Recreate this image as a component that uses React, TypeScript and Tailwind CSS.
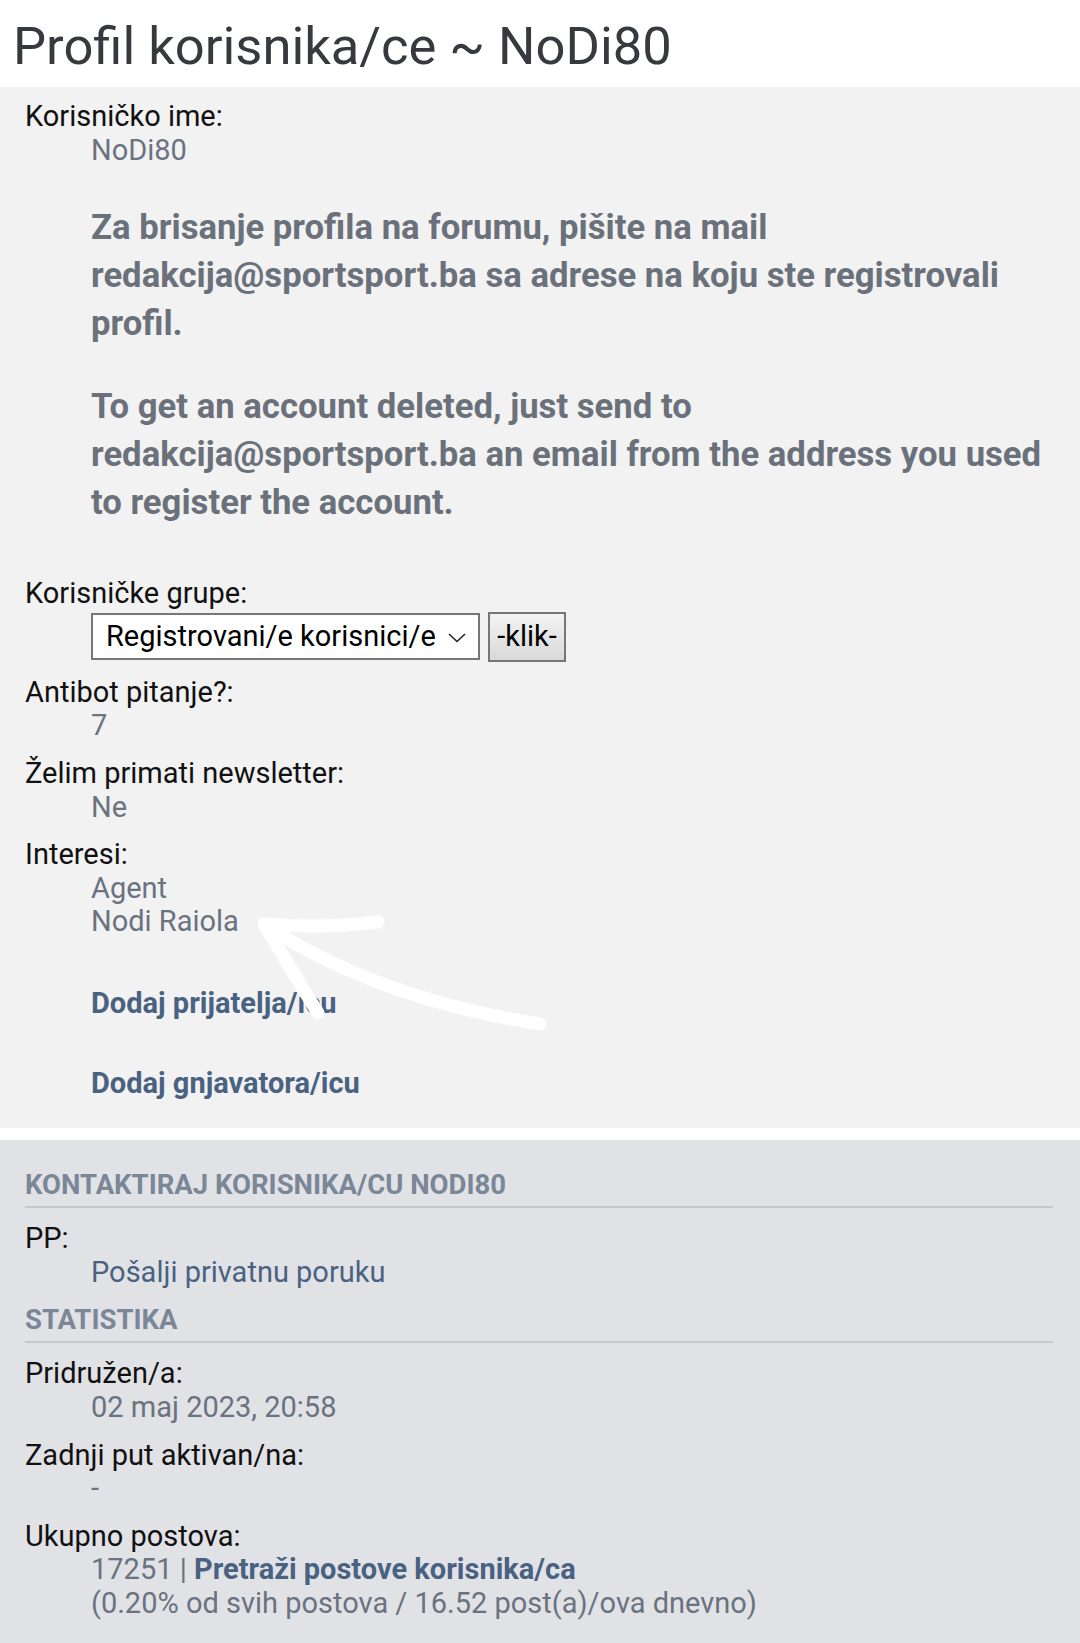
export default function App() {
  const label = "text-[#111111]";
  const value = "ml-[66px] text-[#6b7280]";
  const link = "text-[#4a6282]";
  return (
    <div className="relative w-[1080px] min-h-[1643px] bg-white font-['Roboto',sans-serif] text-[29px] leading-[33.6px]">
      <h1 className="h-[87px] pt-[15px] pl-[13px] text-[52.5px] leading-[1.2] font-normal text-[#36393e]">
        Profil korisnika/ce ~ NoDi80
      </h1>

      <section className="bg-[#f2f2f2] pl-[25px] pr-[27px] pt-[13px] pb-[28px]">
        <div className={label}>Korisničko ime:</div>
        <div className={value}>
          <div>NoDi80</div>
          <p className="mt-[36px] text-[34.7px] leading-[48px] font-bold text-[#6b717b]">
            Za brisanje profila na forumu, pišite na mail redakcija@sportsport.ba sa adrese na koju ste registrovali profil.
          </p>
          <p className="mt-[35px] text-[34.7px] leading-[48px] font-bold text-[#6b717b]">
            To get an account deleted, just send to redakcija@sportsport.ba an email from the address you used to register the account.
          </p>
        </div>

        <div className={`mt-[51px] ${label}`}>Korisničke grupe:</div>
        <div className="ml-[66px] mt-px flex items-center gap-[8px]">
          <div className="flex h-[47px] w-[389px] items-center justify-between border-2 border-[#767676] bg-white pl-[13px] pr-[12px] text-[#000]">
            <span>Registrovani/e korisnici/e</span>
            <svg width="18" height="10" viewBox="0 0 18 10" className="mt-[2px]">
              <path d="M1 1 L9 8.5 L17 1" fill="none" stroke="#222" strokeWidth="1.6" />
            </svg>
          </div>
          <button className="h-[50px] w-[78px] border-2 border-[#767676] bg-gradient-to-b from-[#f3f3f3] to-[#d9d9d9] text-[29px] leading-none text-black">
            -klik-
          </button>
        </div>

        <div className={`mt-[14px] ${label}`}>Antibot pitanje?:</div>
        <div className={value}>7</div>

        <div className={`mt-[14px] ${label}`}>Želim primati newsletter:</div>
        <div className={value}>Ne</div>

        <div className={`mt-[14px] ${label}`}>Interesi:</div>
        <div className={value}>
          <div>Agent</div>
          <div>Nodi Raiola</div>
          <div className={`mt-[48px] font-bold ${link}`}>Dodaj prijatelja/icu</div>
          <div className={`mt-[46px] font-bold ${link}`}>Dodaj gnjavatora/icu</div>
        </div>
      </section>

      <section className="mt-[12px] bg-[#e1e2e6] pl-[25px] pr-[27px] pt-[28px] pb-[40px]">
        <h2 className="border-b-2 border-[#c7c8cc] pb-[5px] text-[27.5px] font-bold uppercase leading-[1.2] text-[#7b8697]">
          Kontaktiraj korisnika/cu NoDi80
        </h2>
        <div className={`mt-[14px] ${label}`}>PP:</div>
        <div className={`ml-[66px] ${link}`}>Pošalji privatnu poruku</div>

        <h2 className="mt-[14px] border-b-2 border-[#c7c8cc] pb-[5px] text-[27.5px] font-bold uppercase leading-[1.2] text-[#7b8697]">
          Statistika
        </h2>
        <div className={`mt-[14px] ${label}`}>Pridružen/a:</div>
        <div className={value}>02 maj 2023, 20:58</div>

        <div className={`mt-[14px] ${label}`}>Zadnji put aktivan/na:</div>
        <div className={value}>-</div>

        <div className={`mt-[14px] ${label}`}>Ukupno postova:</div>
        <div className={value}>
          <div>
            17251 | <span className={`font-bold ${link}`}>Pretraži postove korisnika/ca</span>
          </div>
          <div>(0.20% od svih postova / 16.52 post(a)/ova dnevno)</div>
        </div>
      </section>

      <svg
        className="pointer-events-none absolute left-0 top-0"
        width="1080"
        height="1643"
        viewBox="0 0 1080 1643"
      >
        <g fill="none" stroke="#ffffff" strokeWidth="13" strokeLinecap="round" strokeLinejoin="round">
          <path d="M264 924 Q320 929 378 922" />
          <path d="M264 924 Q290 968 318 1013" />
          <path d="M276 932 Q385 1000 540 1024" />
        </g>
      </svg>
    </div>
  );
}
